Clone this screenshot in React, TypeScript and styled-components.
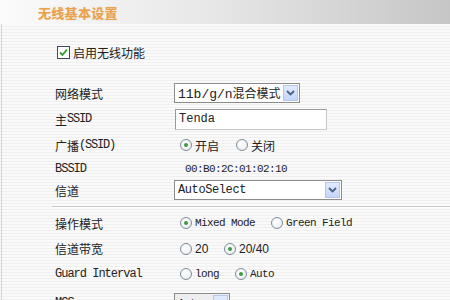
import styled, { createGlobalStyle } from "styled-components";

const GlobalStyle = createGlobalStyle`
  html, body {
    margin: 0;
    padding: 0;
  }
  body {
    width: 450px;
    height: 300px;
    overflow: hidden;
    font-family: "Noto Sans CJK SC", sans-serif;
    color: #222;
  }
`;

const Page = styled.div`
  width: 450px;
  height: 300px;
  overflow: hidden;
  display: flex;
  flex-direction: column;
  background: repeating-linear-gradient(
    to bottom,
    #fafafa 0px,
    #fafafa 2px,
    #efefef 2px,
    #efefef 3px
  );
`;

const Header = styled.div`
  height: 24px;
  flex: none;
  display: flex;
  align-items: center;
  padding-left: 38px;
  background: linear-gradient(to right, #fbfbfb 0%, #e8e8e8 45%, #c6c6c6 100%);
`;

const Title = styled.h1`
  margin: 0;
  font-size: 13px;
  font-weight: bold;
  letter-spacing: 0.3px;
  color: #e9a24c;
  text-shadow: 0 0 1px rgba(233, 162, 76, 0.5);
`;

const Body = styled.div`
  flex: none;
  display: flex;
  flex-direction: column;
  padding: 18px 0 0 53px;
  border-left: 1px solid #d6d6d6;
  margin-left: 1px;
`;

const EnableRow = styled.label`
  height: 20px;
  display: flex;
  align-items: center;
  gap: 3px;
  padding-left: 2px;
  margin-bottom: 18px;
  font-size: 12px;
`;

const CheckBox = styled.span`
  width: 11px;
  height: 11px;
  border: 1px solid #3b4a5a;
  background: #fff;
  display: flex;
  align-items: center;
  justify-content: center;
`;

const Row = styled.div<{ $h: number }>`
  height: ${(p) => p.$h}px;
  flex: none;
  display: flex;
  align-items: center;
  white-space: nowrap;
`;

const Label = styled.div<{ $latin?: boolean }>`
  width: 119px;
  flex: none;
  display: flex;
  align-items: center;
  font-size: 12px;
  font-family: ${(p) =>
    p.$latin
      ? `"Liberation Mono", "Noto Sans CJK SC", monospace`
      : `"Noto Sans CJK SC", sans-serif`};
  letter-spacing: ${(p) => (p.$latin ? "-1px" : "0")};
`;

const Mono = styled.span<{ $size?: number; $ls?: number }>`
  font-family: "Liberation Mono", "Noto Sans CJK SC", monospace;
  font-size: ${(p) => p.$size ?? 11}px;
  letter-spacing: ${(p) => p.$ls ?? -0.6}px;
`;

const SelectBox = styled.div<{ $w: number; $grey?: boolean }>`
  width: ${(p) => p.$w}px;
  height: 20px;
  box-sizing: border-box;
  border: 1px solid #8c8c8c;
  background: ${(p) => (p.$grey ? "#eeeeee" : "#fff")};
  display: flex;
  align-items: center;
  justify-content: space-between;
  padding: 0 1px 0 3px;
  font-size: 12px;
  white-space: nowrap;
`;

const ArrowButton = styled.span`
  width: 15px;
  height: 16px;
  box-sizing: border-box;
  border: 1px solid #b4c8ee;
  background: linear-gradient(#e2ebfd, #c3d5fa);
  display: flex;
  align-items: center;
  justify-content: center;
  flex: none;
`;

const TextInput = styled.div`
  width: 152px;
  height: 21px;
  box-sizing: border-box;
  margin-left: 1px;
  border: 1px solid #9a9a9a;
  border-right-color: #c8c8c8;
  border-bottom-color: #c8c8c8;
  background: #fff;
  display: flex;
  align-items: center;
  padding-left: 3px;
`;

const Separator = styled.div`
  height: 10px;
  flex: none;
  display: flex;
  align-items: center;
  margin-left: -3px;
  &::after {
    content: "";
    flex: 1;
    height: 1px;
    background: #c9c9c9;
    box-shadow: 0 1px 0 #ffffff;
  }
`;

const Options = styled.div`
  display: flex;
  align-items: center;
  padding-left: 6px;
`;

const Option = styled.span<{ $w: number }>`
  width: ${(p) => p.$w}px;
  display: flex;
  align-items: center;
  gap: 3px;
  font-size: 12px;
`;

const Radio = styled.span<{ $on?: boolean }>`
  width: 12px;
  height: 12px;
  box-sizing: border-box;
  border-radius: 50%;
  border: 1px solid #7e8c98;
  background: radial-gradient(circle at 40% 35%, #ffffff, #e6e9ec);
  display: flex;
  align-items: center;
  justify-content: center;
  flex: none;
  &::after {
    content: "";
    display: ${(p) => (p.$on ? "block" : "none")};
    width: 4px;
    height: 4px;
    border-radius: 50%;
    background: #3b9c3b;
  }
`;

const SansNum = styled.span`
  font-family: "Liberation Sans", sans-serif;
  font-size: 12px;
`;

const Value = styled.div`
  display: flex;
  align-items: center;
  padding-left: 11px;
`;

function Chevron() {
  return (
    <svg width="9" height="6" viewBox="0 0 9 6">
      <path d="M1 1 L4.5 4.5 L8 1" fill="none" stroke="#4d6185" strokeWidth="1.8" />
    </svg>
  );
}

export default function App() {
  return (
    <>
      <GlobalStyle />
      <Page>
        <Header>
          <Title>无线基本设置</Title>
        </Header>
        <Body>
          <EnableRow>
            <CheckBox>
              <svg width="9" height="9" viewBox="0 0 9 9">
                <path d="M1 4.5 L3.5 7 L8 1.5" fill="none" stroke="#2f9a2f" strokeWidth="1.8" />
              </svg>
            </CheckBox>
            启用无线功能
          </EnableRow>

          <Row $h={26}>
            <Label>网络模式</Label>
            <SelectBox $w={126}>
              <span>
                <Mono $size={13} $ls={0}>11b/g/n</Mono>混合模式
              </span>
              <ArrowButton>
                <Chevron />
              </ArrowButton>
            </SelectBox>
          </Row>

          <Row $h={26}>
            <Label>
              主<Mono $size={12} $ls={-1.2}>SSID</Mono>
            </Label>
            <TextInput>
              <Mono $size={12} $ls={0}>Tenda</Mono>
            </TextInput>
          </Row>

          <Row $h={26}>
            <Label>
              广播<Mono $size={12} $ls={-1.2}>(SSID)</Mono>
            </Label>
            <Options>
              <Option $w={56}>
                <Radio $on />
                开启
              </Option>
              <Option $w={50}>
                <Radio />
                关闭
              </Option>
            </Options>
          </Row>

          <Row $h={21}>
            <Label $latin>BSSID</Label>
            <Value>
              <Mono>00:B0:2C:01:02:10</Mono>
            </Value>
          </Row>

          <Row $h={22}>
            <Label>信道</Label>
            <SelectBox $w={168}>
              <Mono $size={12} $ls={-0.4}>AutoSelect</Mono>
              <ArrowButton>
                <Chevron />
              </ArrowButton>
            </SelectBox>
          </Row>

          <Separator />

          <Row $h={24}>
            <Label>操作模式</Label>
            <Options>
              <Option $w={91}>
                <Radio $on />
                <Mono>Mixed Mode</Mono>
              </Option>
              <Option $w={90}>
                <Radio />
                <Mono>Green Field</Mono>
              </Option>
            </Options>
          </Row>

          <Row $h={27}>
            <Label>信道带宽</Label>
            <Options>
              <Option $w={44}>
                <Radio />
                <SansNum>20</SansNum>
              </Option>
              <Option $w={50}>
                <Radio $on />
                <SansNum>20/40</SansNum>
              </Option>
            </Options>
          </Row>

          <Row $h={24}>
            <Label $latin>Guard Interval</Label>
            <Options>
              <Option $w={55}>
                <Radio />
                <Mono>long</Mono>
              </Option>
              <Option $w={50}>
                <Radio $on />
                <Mono>Auto</Mono>
              </Option>
            </Options>
          </Row>

          <Row $h={34}>
            <Label $latin>MCS</Label>
            <SelectBox $w={56} $grey>
              <Mono>Auto</Mono>
              <ArrowButton>
                <Chevron />
              </ArrowButton>
            </SelectBox>
          </Row>
        </Body>
      </Page>
    </>
  );
}
